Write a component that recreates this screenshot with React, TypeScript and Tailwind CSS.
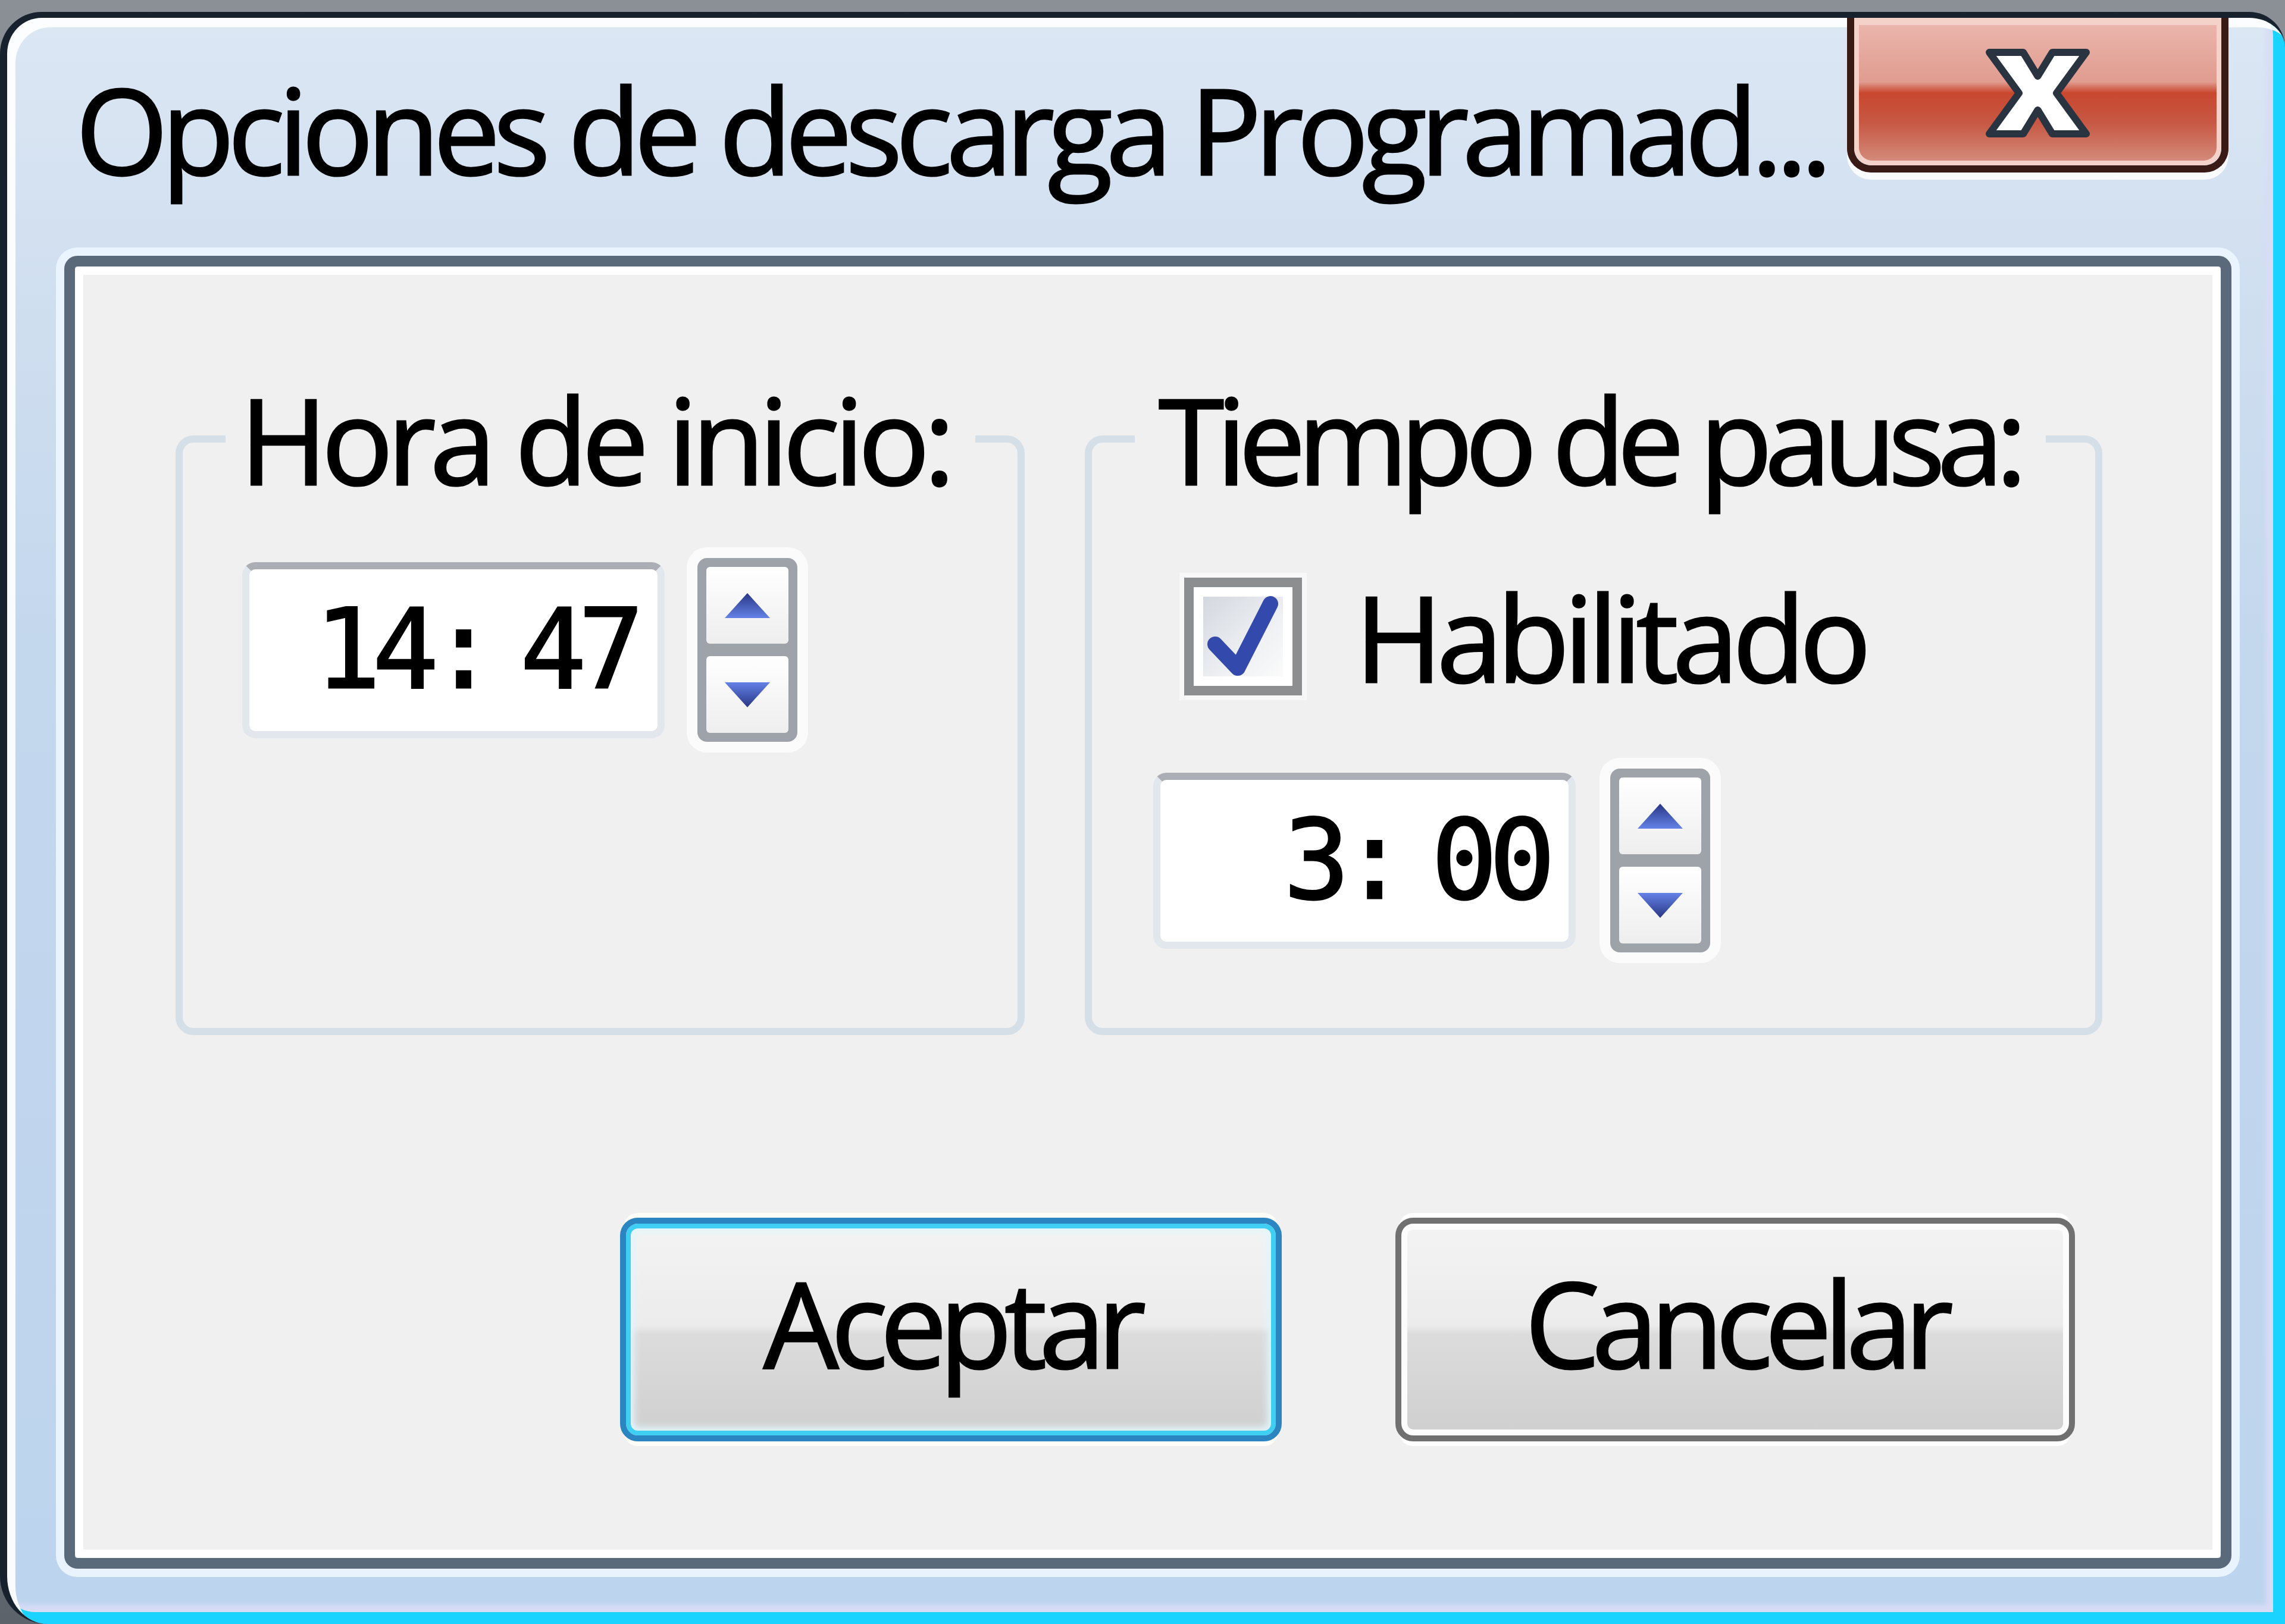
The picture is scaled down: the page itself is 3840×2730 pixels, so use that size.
import React from 'react';

const SpinArrow = ({ dir }: { dir: 'up' | 'down' }) => (
  <svg width="84" height="50" viewBox="0 0 84 50">
    <defs>
      <linearGradient id={`arrow-${dir}`} x1="0" y1={dir === 'up' ? '0' : '1'} x2="0" y2={dir === 'up' ? '1' : '0'}>
        <stop offset="0" stopColor="#283685" />
        <stop offset="1" stopColor="#6482e6" />
      </linearGradient>
    </defs>
    <polygon points={dir === 'up' ? '42,4 80,46 4,46' : '4,4 80,4 42,46'} fill={`url(#arrow-${dir})`} />
  </svg>
);

const Spinner = () => (
  <div className="w-[168px] h-[309px] shrink-0 rounded-[16px] bg-[#9ea2a9] p-[15px] flex flex-col gap-[21px] shadow-[0_0_0_18px_#fbfbfb]">
    <div className="flex-1 rounded-[6px] bg-[linear-gradient(180deg,#ffffff,#eeeeee)] flex items-center justify-center">
      <SpinArrow dir="up" />
    </div>
    <div className="flex-1 rounded-[6px] bg-[linear-gradient(180deg,#ffffff,#eeeeee)] flex items-center justify-center">
      <SpinArrow dir="down" />
    </div>
  </div>
);

const TimeField = ({ value }: { value: string }) => (
  <div className="w-[710px] h-[296px] shrink-0 rounded-[22px] border-[12px] border-[#e2e6ed] border-t-[#abaeb5] bg-white flex items-center justify-end pr-[36px] font-['DejaVu_Sans_Mono',monospace] text-[185px] leading-none tracking-[-14px] [word-spacing:-44px] [-webkit-text-stroke:3px_#000] text-black whitespace-pre">
    {value}
  </div>
);

const Checkbox = () => (
  <div className="relative w-[198px] h-[198px] shrink-0 border-[16px] border-[#8d8e8f] bg-white p-[16px] shadow-[0_0_0_8px_#f8f8f8]">
    <div className="w-full h-full bg-[linear-gradient(135deg,#d3d7df,#eef0f3_60%,#fbfbfb)]" />
    <svg className="absolute -left-[16px] -top-[16px]" width="198" height="198" viewBox="0 0 198 198">
      <polyline points="52,112 90,152 145,44" fill="none" stroke="#3349ab" strokeWidth="26" strokeLinecap="round" strokeLinejoin="round" />
    </svg>
  </div>
);

export default function App() {
  return (
    <div className="w-[3840px] h-[2730px] pt-[20px] flex flex-col bg-[linear-gradient(180deg,#8b9096,#5c636a)] font-['Open_Sans','Noto_Sans',sans-serif] [-webkit-text-stroke:3px_#000] text-black overflow-hidden">
      {/* window frame */}
      <div className="flex-1 flex flex-col rounded-tl-[70px] rounded-tr-[60px] rounded-bl-[80px] border-l-[12px] border-t-[10px] border-[#17222e] bg-[linear-gradient(180deg,#dce7f4_0%,#d2e0f0_14%,#c3d7ed_40%,#bdd4ee_100%)] shadow-[inset_14px_16px_0_0_rgba(255,255,255,0.9),inset_-20px_-20px_0_0_#1bd3ff,inset_-32px_-32px_8px_0_#d8dcf6]">
        {/* title bar */}
        <div className="h-[400px] shrink-0 flex items-start justify-between">
          <div className="pt-[87px] pl-[115px] text-[200px] leading-none tracking-[-11px] whitespace-nowrap">
            Opciones de descarga Programad...
          </div>
          <div className="mr-[95px] w-[641px] h-[260px] shrink-0 rounded-b-[40px] border-x-[12px] border-b-[12px] border-[#3a1a14] shadow-[0_12px_0_0_rgba(255,255,255,0.85)]">
            <div className="w-full h-full rounded-b-[30px] border-x-[8px] border-b-[8px] border-t-[12px] border-[#f4d2ca] bg-[linear-gradient(180deg,#eab5ac_0%,#e09c8f_42%,#c9472f_50%,#c65843_72%,#d48a7a_100%)] flex items-center justify-center">
              <svg width="185" height="165" viewBox="-6 -6 185 165">
                <polygon
                  points="5,8 62,8 86.5,48 111,8 168,8 118,76.5 168,145 111,145 86.5,105 62,145 5,145 55,76.5"
                  fill="#ffffff"
                  stroke="#2a3440"
                  strokeWidth="12"
                  strokeLinejoin="round"
                />
              </svg>
            </div>
          </div>
        </div>

        {/* client area */}
        <div className="flex-1 ml-[96px] mr-[90px] mb-[93px] rounded-[22px] border-[18px] border-[#5b6a7b] shadow-[0_0_0_14px_rgba(236,246,255,0.9)]">
          <div className="h-full rounded-[6px] border-[14px] border-white bg-[#f0f0f0] flex flex-col">
            <div className="mt-[176px] ml-[155px] flex gap-[101px]">
              <fieldset className="w-[1427px] h-[1102px] rounded-[30px] border-[12px] border-[#d5dfe7]">
                <legend className="ml-[72px] pl-[24px] pr-[44px] text-[200px] leading-none tracking-[-10px] whitespace-nowrap">
                  Hora de inicio:
                </legend>
                <div className="pt-[100px] pl-[100px] flex items-center gap-[55px]">
                  <TimeField value="14: 47" />
                  <Spinner />
                </div>
              </fieldset>

              <fieldset className="w-[1710px] h-[1102px] rounded-[30px] border-[12px] border-[#d5dfe7]">
                <legend className="ml-[72px] pl-[40px] pr-[44px] text-[200px] leading-none tracking-[-13px] whitespace-nowrap">
                  Tiempo de pausa:
                </legend>
                <div className="pt-[132px] pl-[155px] flex items-center gap-[89px]">
                  <Checkbox />
                  <span className="text-[200px] leading-none tracking-[-10px]">Habilitado</span>
                </div>
                <div className="mt-[122px] pl-[103px] flex items-center gap-[58px]">
                  <TimeField value="3: 00" />
                  <Spinner />
                </div>
              </fieldset>
            </div>

            <div className="mt-[307px] pr-[231px] flex justify-end gap-[191px]">
              <button className="w-[1112px] h-[376px] rounded-[30px] border-[10px] border-[#2b85c0] shadow-[inset_0_0_0_8px_#3fcff3,inset_0_0_12px_14px_#e2f6fc,0_-14px_0_-6px_#fffdf8,0_14px_0_-6px_#fffdf8] bg-[linear-gradient(180deg,#f3f3f3_0%,#ececec_48%,#dcdcdc_52%,#cfcfcf_100%)] pb-[24px] text-[200px] leading-none tracking-[-13px] flex items-center justify-center">
                Aceptar
              </button>
              <button className="w-[1142px] h-[376px] rounded-[30px] border-[10px] border-[#707070] shadow-[inset_0_0_0_10px_#fcfcfc,0_-14px_0_-6px_#ffffff,0_14px_0_-6px_#ffffff] bg-[linear-gradient(180deg,#f3f3f3_0%,#ececec_48%,#dcdcdc_52%,#cfcfcf_100%)] pb-[24px] text-[200px] leading-none tracking-[-13px] flex items-center justify-center">
                Cancelar
              </button>
            </div>
          </div>
        </div>
      </div>
    </div>
  );
}
